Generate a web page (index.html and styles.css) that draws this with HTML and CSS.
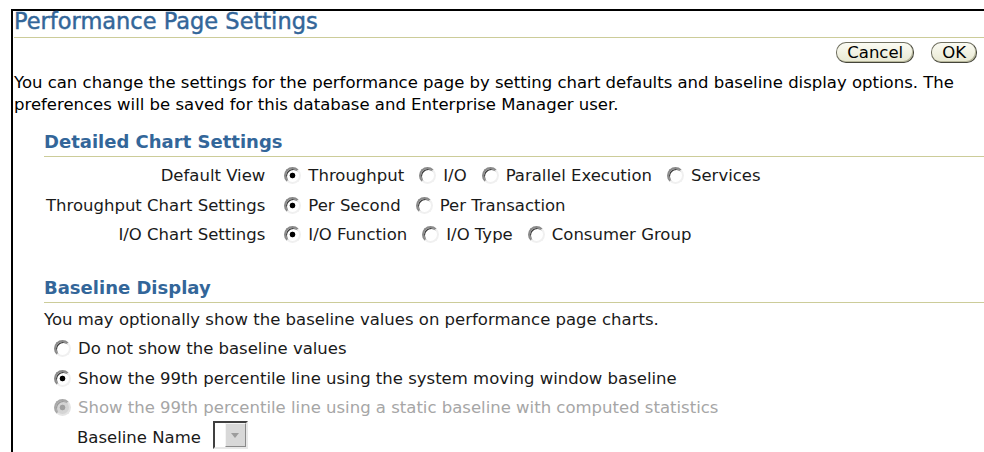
FILE: index.html
```html
<!doctype html>
<html>
<head>
    <meta charset="UTF-8">
    <title>Performance Page Settings</title>
    <link rel="stylesheet" href="styles.css">
</head>
<body>
    <div class="page">
        <h1>Performance Page Settings</h1>
        <div class="actions">
            <button type="button" class="btn">Cancel</button>
            <button type="button" class="btn">OK</button>
        </div>
        <p class="intro">You can change the settings for the performance page by setting chart defaults and baseline display options. The preferences will be saved for this database and Enterprise Manager user.</p>

        <h2>Detailed Chart Settings</h2>
        <div class="chart-grid">
            <span class="field-label">Default View</span>
            <span class="opts">
                <label class="opt"><input type="radio" class="radio" name="view" checked>Throughput</label>
                <label class="opt"><input type="radio" class="radio" name="view">I/O</label>
                <label class="opt"><input type="radio" class="radio" name="view">Parallel Execution</label>
                <label class="opt"><input type="radio" class="radio" name="view">Services</label>
            </span>
            <span class="field-label">Throughput Chart Settings</span>
            <span class="opts">
                <label class="opt"><input type="radio" class="radio" name="tput" checked>Per Second</label>
                <label class="opt"><input type="radio" class="radio" name="tput">Per Transaction</label>
            </span>
            <span class="field-label">I/O Chart Settings</span>
            <span class="opts">
                <label class="opt"><input type="radio" class="radio" name="io" checked>I/O Function</label>
                <label class="opt"><input type="radio" class="radio" name="io">I/O Type</label>
                <label class="opt"><input type="radio" class="radio" name="io">Consumer Group</label>
            </span>
        </div>

        <h2 class="second">Baseline Display</h2>
        <div class="baseline">
            <div>You may optionally show the baseline values on performance page charts.</div>
            <div class="choice"><label class="opt"><input type="radio" class="radio" name="base">Do not show the baseline values</label></div>
            <div class="choice"><label class="opt"><input type="radio" class="radio" name="base" checked>Show the 99th percentile line using the system moving window baseline</label></div>
            <div class="choice disabled"><label class="opt"><input type="radio" class="radio" name="base2" checked disabled>Show the 99th percentile line using a static baseline with computed statistics</label></div>
            <div class="name-row">Baseline Name <span class="select"><span class="select-field"></span><span class="select-btn"><span class="arrow"></span></span></span></div>
        </div>
    </div>
</body>
</html>
```

FILE: styles.css
```css
body {
    margin: 0;
    background-color: #fff;
    color: #000;
    font-family: "DejaVu Sans", "Liberation Sans", sans-serif;
    font-size: 16.5px;
}
.page {
    margin: 9px 0 0 11px;
    padding-left: 1px;
    border-top: 2px solid #000;
    border-left: 2px solid #000;
    min-height: 441px;
}
h1 {
    margin: 0;
    font-size: 22.5px;
    font-weight: normal;
    line-height: 20px;
    color: #336699;
    -webkit-text-stroke: 0.45px #336699;
    padding-bottom: 6px;
    border-bottom: 1px solid #cccc99;
}
.actions {
    display: flex;
    justify-content: flex-end;
    gap: 17px;
    margin-top: 4px;
    padding-right: 7px;
}
.btn {
    height: 21px;
    padding: 0 10px;
    font-family: inherit;
    font-size: 16.5px;
    line-height: 19px;
    color: #000;
    border: 1px solid #707060;
    border-bottom-color: #45453a;
    border-right-color: #45453a;
    border-radius: 10px;
    background: linear-gradient(#fbfbf3, #e8e8d2);
    box-shadow: inset -1px -1px 0 #b8b89c;
}
.intro {
    margin: 9px 7px 0 0;
    line-height: 22px;
}
h2 {
    margin: 16px 0 0 30px;
    font-size: 18px;
    font-weight: bold;
    line-height: 20px;
    color: #336699;
    padding-bottom: 4px;
    border-bottom: 1px solid #cccc99;
}
h2.second {
    margin-top: 28px;
}
.chart-grid {
    display: grid;
    grid-template-columns: auto auto;
    justify-content: start;
    column-gap: 19px;
    margin: 4px 0 0 30px;
    line-height: 29.5px;
    color: #1a1a1a;
}
.field-label {
    text-align: right;
    padding-left: 2px;
}
.opts {
    display: flex;
    gap: 15px;
}
.opt {
    display: inline-flex;
    align-items: center;
    gap: 7px;
}
.radio {
    -webkit-appearance: none;
    appearance: none;
    width: 17px;
    height: 17px;
    margin: 0;
    border-radius: 50%;
    border: 2px solid;
    border-color: #8a8a8a #f0f0f0 #f0f0f0 #8a8a8a;
    background: #fff;
    box-shadow: inset 1px 1px 0 #3c3c3c;
}
.radio:checked {
    background: radial-gradient(circle, #000 0 2.5px, #fff 3.2px);
}
.radio:disabled {
    border-color: #a8a8a8 #e4e4e4 #e4e4e4 #a8a8a8;
    box-shadow: inset 1px 1px 0 #9a9a9a;
    background: radial-gradient(circle, #a0a0a0 0 2.5px, #d4d4d4 3.2px);
}
.baseline {
    margin: 2px 0 0 30px;
    line-height: 29.5px;
    color: #1a1a1a;
}
.choice {
    display: flex;
    padding-left: 10px;
}
.disabled {
    color: #a6a6a6;
}
.name-row {
    display: flex;
    align-items: center;
    gap: 12px;
    padding-left: 33px;
}
.select {
    display: inline-flex;
    width: 35px;
    height: 28px;
    margin-top: -4px;
    box-sizing: border-box;
    border: 2px solid;
    border-color: #404040 #e8e8e8 #e8e8e8 #404040;
    background: #fff;
}
.select-field {
    flex: 1;
}
.select-btn {
    width: 19px;
    display: flex;
    align-items: center;
    justify-content: center;
    background: #d8d8d8;
    border: 1px solid;
    border-color: #f4f4f4 #8a8a8a #8a8a8a #f4f4f4;
}
.arrow {
    width: 0;
    height: 0;
    border-left: 4px solid transparent;
    border-right: 4px solid transparent;
    border-top: 5px solid #9c9c9c;
}
```
